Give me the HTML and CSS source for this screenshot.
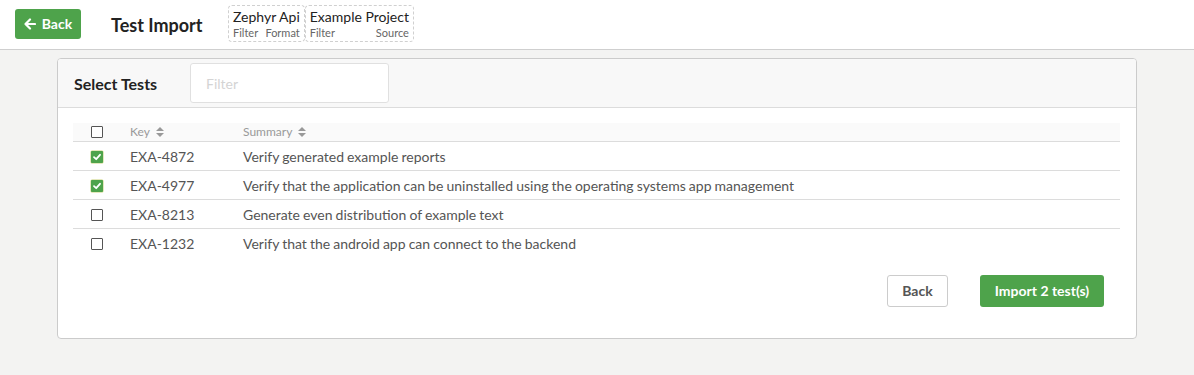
FILE: index.html
```html
<!DOCTYPE html>
<html>
<head>
<meta charset="utf-8">
<link rel="stylesheet" href="styles.css">
</head>
<body>
<header class="topbar">
  <button class="btn-back-top">
    <svg class="arrow" width="12" height="12" viewBox="0 0 12 12"><path d="M6 1.5 L1.5 6 L6 10.5 M1.5 6 H11" fill="none" stroke="#fff" stroke-width="2.2" stroke-linecap="round" stroke-linejoin="round"/></svg>
    Back
  </button>
  <h1 class="page-title">Test Import</h1>
  <div class="tags">
    <div class="tag">
      <div class="tag-title">Zephyr Api</div>
      <div class="tag-sub"><span>Filter</span><span>Format</span></div>
    </div>
    <div class="tag">
      <div class="tag-title">Example Project</div>
      <div class="tag-sub"><span>Filter</span><span>Source</span></div>
    </div>
  </div>
</header>
<main class="content">
  <section class="card">
    <div class="card-head">
      <div class="card-title">Select Tests</div>
      <input class="filter" type="text" placeholder="Filter">
    </div>
    <div class="card-body">
      <table class="tests">
        <thead>
          <tr>
            <th class="c-check"><span class="cb"></span></th>
            <th class="c-key">Key <span class="sort"></span></th>
            <th>Summary <span class="sort"></span></th>
          </tr>
        </thead>
        <tbody>
          <tr>
            <td class="c-check"><span class="cb on"></span></td>
            <td class="c-key">EXA-4872</td>
            <td>Verify generated example reports</td>
          </tr>
          <tr>
            <td class="c-check"><span class="cb on"></span></td>
            <td class="c-key">EXA-4977</td>
            <td>Verify that the application can be uninstalled using the operating systems app management</td>
          </tr>
          <tr>
            <td class="c-check"><span class="cb"></span></td>
            <td class="c-key">EXA-8213</td>
            <td>Generate even distribution of example text</td>
          </tr>
          <tr>
            <td class="c-check"><span class="cb"></span></td>
            <td class="c-key">EXA-1232</td>
            <td>Verify that the android app can connect to the backend</td>
          </tr>
        </tbody>
      </table>
      <div class="actions">
        <button class="btn btn-default">Back</button>
        <button class="btn btn-primary">Import 2 test(s)</button>
      </div>
    </div>
  </section>
</main>
</body>
</html>
```

FILE: styles.css
```css
* { box-sizing: border-box; }
html, body { margin: 0; padding: 0; }
body {
  font-family: Lato, "Open Sans", Arial, sans-serif;
  background: #f3f3f2;
  color: #555;
  height: 375px;
  overflow: hidden;
}
.topbar {
  background: #fff;
  height: 50px;
  border-bottom: 1px solid #cfcfcf;
  display: flex;
  align-items: center;
  padding: 0 15px;
}
.btn-back-top {
  height: 30px;
  width: 66px;
  background: #4ea34b;
  border: none;
  border-radius: 3px;
  color: #fff;
  font-family: inherit;
  font-weight: 700;
  font-size: 14px;
  display: flex;
  align-items: center;
  justify-content: center;
  gap: 6px;
  padding: 0 0 1px;
  margin-top: -1px;
}
.arrow { display: block; }
.page-title {
  margin: 0 0 0 30px;
  font-size: 18px;
  font-weight: 700;
  color: #222;
  width: 117px;
}
.tags {
  display: flex;
  margin-top: -2px;
}
.tag {
  border: 1px dashed #d0d0d0;
  border-radius: 4px;
  padding: 2px 4px 1px 4px;
  height: 37px;
}
.tag-title {
  font-size: 14px;
  color: #222;
  line-height: 18px;
}
.tag-sub {
  display: flex;
  justify-content: space-between;
  gap: 5px;
  font-size: 11px;
  color: #666;
  line-height: 14px;
}
.content {
  padding: 8px 57px 0 57px;
}
.card {
  background: #fff;
  border: 1px solid #cbcbcb;
  border-radius: 4px;
  overflow: hidden;
}
.card-head {
  background: #f8f8f8;
  border-bottom: 1px solid #dcdcdc;
  display: flex;
  align-items: center;
  height: 49px;
  padding-left: 16px;
}
.card-title {
  font-size: 16px;
  font-weight: 700;
  color: #222;
  width: 116px;
  padding-top: 1px;
}
.filter {
  width: 199px;
  height: 40px;
  border: 1px solid #e0e0e0;
  border-radius: 3px;
  background: #fff;
  font-family: inherit;
  font-size: 14px;
  padding: 0 15px;
  margin-top: 0;
  outline: none;
}
.filter::placeholder { color: #d4d4d4; }
.card-body {
  padding: 15px 16px 31px 15px;
}
.tests {
  width: 100%;
  border-collapse: collapse;
}
.tests th {
  background: #fafafa;
  height: 18px;
  font-size: 12px;
  font-weight: 400;
  color: #999;
  text-align: left;
  padding: 0;
  border-bottom: 1px solid #dcdcdc;
  line-height: 18px;
}
.tests td {
  height: 29px;
  font-size: 14px;
  word-spacing: -0.5px;
  color: #555;
  padding: 0;
  border-bottom: 1px solid #dcdcdc;
}
.tests tbody tr:last-child td { border-bottom: none; }
.c-check { width: 57px; padding-left: 18px !important; }
.c-key { width: 113px; }
.cb {
  display: block;
  width: 12px;
  height: 12px;
  border: 1.5px solid #555;
  border-radius: 1px;
  background: #fff;
  margin-top: 1px;
}
th .cb { margin-top: 0; }
.cb.on {
  border: none;
  background: #4ea34b url("data:image/svg+xml;utf8,<svg xmlns='http://www.w3.org/2000/svg' width='12' height='12' viewBox='0 0 12 12'><path d='M3 6.2 L5.2 8.2 L9 3.8' fill='none' stroke='white' stroke-width='1.8' stroke-linecap='round' stroke-linejoin='round'/></svg>") center/12px 12px no-repeat;
  box-shadow: 0 0 0 0.5px #c9d27a;
}
.sort {
  display: inline-block;
  width: 8px;
  height: 10px;
  margin-left: 3px;
  vertical-align: -1px;
  position: relative;
}
.sort::before, .sort::after {
  content: "";
  position: absolute;
  left: 0;
  border-left: 4px solid transparent;
  border-right: 4px solid transparent;
}
.sort::before { top: 0; border-bottom: 4px solid #999; }
.sort::after { bottom: 0; border-top: 4px solid #999; }
.actions {
  display: flex;
  justify-content: flex-end;
  gap: 32px;
  margin-top: 17px;
  padding-right: 16px;
}
.btn {
  height: 32px;
  border-radius: 3px;
  font-family: inherit;
  font-size: 14px;
  font-weight: 700;
  padding: 0;
}
.btn-default {
  width: 61px;
  background: #fff;
  border: 1px solid #ccc;
  color: #555;
}
.btn-primary {
  width: 124px;
  background: #4ea34b;
  border: none;
  color: #fff;
}
```
